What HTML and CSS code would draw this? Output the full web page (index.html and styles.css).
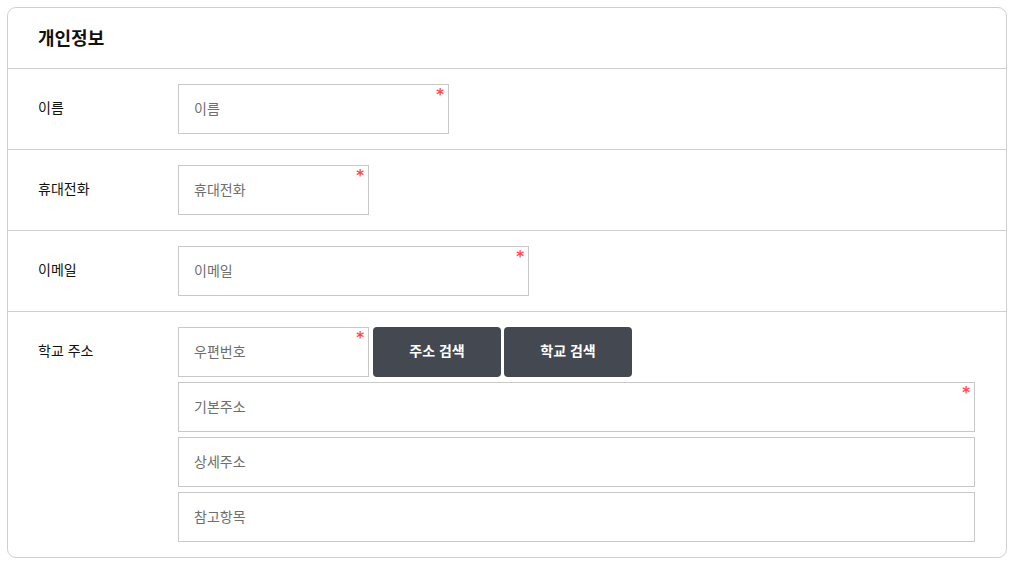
FILE: index.html
```html
<!DOCTYPE html>
<html lang="ko">
<head>
<meta charset="utf-8">
<link rel="stylesheet" href="styles.css">
</head>
<body>
<section class="card">
  <h2 class="card-title">개인정보</h2>
  <div class="row">
    <div class="label">이름</div>
    <div class="fields">
      <div class="field req w270"><input type="text" placeholder="이름"></div>
    </div>
  </div>
  <div class="row">
    <div class="label">휴대전화</div>
    <div class="fields">
      <div class="field req w190"><input type="text" placeholder="휴대전화"></div>
    </div>
  </div>
  <div class="row">
    <div class="label">이메일</div>
    <div class="fields">
      <div class="field req w350"><input type="text" placeholder="이메일"></div>
    </div>
  </div>
  <div class="row">
    <div class="label">학교 주소</div>
    <div class="fields col">
      <div class="line">
        <div class="field req w190"><input type="text" placeholder="우편번호"></div>
        <button class="btn">주소 검색</button>
        <button class="btn">학교 검색</button>
      </div>
      <div class="field req full"><input type="text" placeholder="기본주소"></div>
      <div class="field full"><input type="text" placeholder="상세주소"></div>
      <div class="field full"><input type="text" placeholder="참고항목"></div>
    </div>
  </div>
</section>
</body>
</html>
```
FILE: styles.css
```css
* { box-sizing: border-box; }
body {
  margin: 7px;
  background: #fff;
  font-family: "Noto Sans CJK KR", "Noto Sans", sans-serif;
  color: #111;
}
.card {
  width: 1000px;
  height: 551px;
  border: 1px solid #cfcfcf;
  border-radius: 9px;
}
.card-title {
  margin: 0;
  height: 61px;
  padding-left: 30px;
  padding-bottom: 2px;
  font-size: 18px;
  font-weight: 700;
  line-height: 58px;
  border-bottom: 1px solid #cfcfcf;
  color: #111;
}
.row {
  display: flex;
  align-items: flex-start;
  padding: 15px 30px 15px 30px;
  border-bottom: 1px solid #cfcfcf;
}
.row:last-child { border-bottom: none; }
.label {
  width: 140px;
  flex: none;
  font-size: 14px;
  line-height: 47px;
  color: #111;
}
.fields { flex: 1; display: flex; }
.fields.col { flex-direction: column; gap: 5px; }
.line { display: flex; }
.field {
  position: relative;
  height: 50px;
  border: 1px solid #c8c8c8;
  background: #fff;
}
.field input {
  width: 100%;
  height: 100%;
  border: 0;
  outline: none;
  padding: 0 15px 3px;
  font-family: inherit;
  font-size: 14px;
  color: #333;
  background: transparent;
}
.field input::placeholder { color: #6e6e6e; }
.field.req::after {
  content: "*";
  position: absolute;
  top: 3px;
  right: 4px;
  color: #ff4a4a;
  font-size: 15px;
  font-weight: 700;
  line-height: 15px;
  font-family: "DejaVu Sans", sans-serif;
}
.w270 { width: 271px; }
.w190 { width: 191px; }
.w350 { width: 351px; }
.full { width: 797px; }
.btn {
  width: 128px;
  height: 50px;
  margin-left: 3px;
  border: 0;
  border-radius: 4px;
  background: #434851;
  color: #fff;
  font-family: inherit;
  font-size: 14px;
  font-weight: 700;
  padding: 0 0 4px;
  cursor: pointer;
}
.field + .btn { margin-left: 4px; }
```
